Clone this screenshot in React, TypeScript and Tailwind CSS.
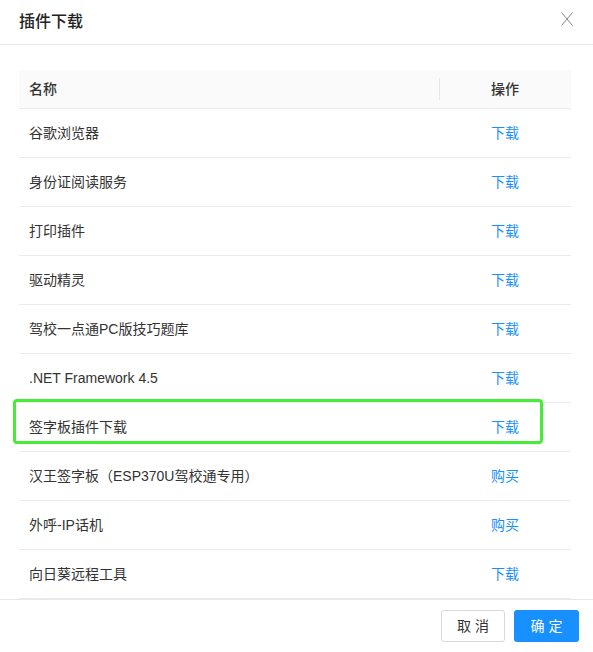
import React from "react";

const rows = [
  { name: "谷歌浏览器", action: "下载" },
  { name: "身份证阅读服务", action: "下载" },
  { name: "打印插件", action: "下载" },
  { name: "驱动精灵", action: "下载" },
  { name: "驾校一点通PC版技巧题库", action: "下载" },
  { name: ".NET Framework 4.5", action: "下载" },
  { name: "签字板插件下载", action: "下载", highlight: true },
  { name: "汉王签字板（ESP370U驾校通专用）", action: "购买" },
  { name: "外呼-IP话机", action: "购买" },
  { name: "向日葵远程工具", action: "下载" },
];

export default function App() {
  return (
    <div
      className="flex h-[652px] w-[593px] flex-col bg-white text-[#333]"
      style={{ fontFamily: '"Liberation Sans", "Noto Sans CJK SC", sans-serif' }}
    >
      {/* header */}
      <div className="flex h-[45px] shrink-0 items-center justify-between border-b border-[#e8e8e8] pl-[19px] pr-[20px]">
        <span className="text-[16px] font-medium text-[#222]">插件下载</span>
        <svg width="12" height="14" viewBox="0 0 12 14" className="mb-[6px] text-[#888]">
          <path d="M0.5 0.5 L11.5 13.5 M11.5 0.5 L0.5 13.5" stroke="currentColor" strokeWidth="1" fill="none" />
        </svg>
      </div>

      {/* body */}
      <div className="flex-1 px-[19px] pt-[25px]">
        <div className="w-[552px] text-[14px]">
          <div className="relative flex h-[39px] items-center border-b border-[#ebebeb] bg-[#fafafa] font-medium">
            <div className="flex-1 pl-[10px]">名称</div>
            <div className="flex w-[132px] justify-center">操作</div>
            <span className="absolute left-[420px] top-[8px] h-[22px] border-l border-[#e6e6e6]" />
          </div>
          {rows.map((r, i) => (
            <div key={i} className="relative flex h-[49px] items-center border-b border-[#ebebeb]">
              <div className="flex-1 pl-[10px]">{r.name}</div>
              <div className="flex w-[132px] justify-center text-[#1890ff]">{r.action}</div>
              {r.highlight && (
                <div className="absolute left-[-6px] top-[-4px] h-[45px] w-[530px] rounded-[4px] border-[3px] border-[#46ec35]" />
              )}
            </div>
          ))}
        </div>
      </div>

      {/* footer */}
      <div className="flex h-[53px] shrink-0 items-center justify-end gap-[9px] border-t border-[#e8e8e8] pr-[14px]">
        <button className="h-[32px] w-[64px] rounded-[3px] border border-[#d9d9d9] bg-white pl-[4px] text-[14px] tracking-[4px] text-[#333]">
          取消
        </button>
        <button className="h-[32px] w-[65px] rounded-[3px] bg-[#1890ff] pl-[4px] text-[14px] tracking-[4px] text-white">
          确定
        </button>
      </div>
    </div>
  );
}
